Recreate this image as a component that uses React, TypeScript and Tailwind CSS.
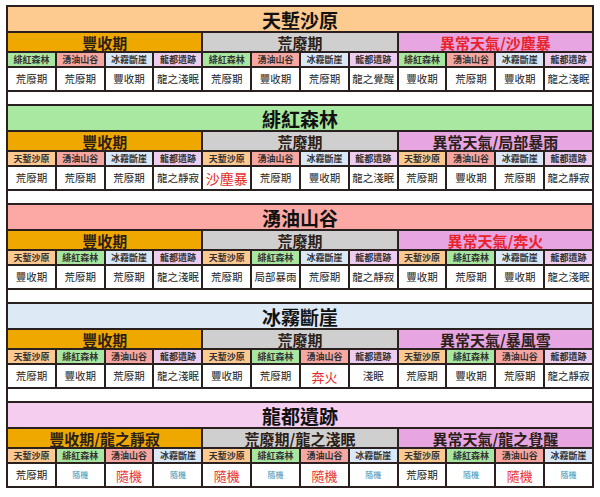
import React from "react";

type Val = { t: string; k?: "n" | "red" | "blue" | "redbig" };

const labelBg: Record<string, string> = {
  天塹沙原: "bg-[#fcc991]",
  緋紅森林: "bg-[#a9e6a0]",
  湧油山谷: "bg-[#f7a7a1]",
  冰霧斷崖: "bg-[#dce8f6]",
  龍都遺跡: "bg-[#eecdee]",
};

type Section = {
  title: string;
  titleBg: string;
  phases: { t: string; red?: boolean }[];
  labels: string[];
  values: Val[];
};

const sections: Section[] = [
  {
    title: "天塹沙原",
    titleBg: "bg-[#fdca90]",
    phases: [{ t: "豐收期" }, { t: "荒廢期" }, { t: "異常天氣/沙塵暴", red: true }],
    labels: ["緋紅森林", "湧油山谷", "冰霧斷崖", "龍都遺跡"],
    values: [
      { t: "荒廢期" }, { t: "荒廢期" }, { t: "豐收期" }, { t: "龍之淺眠" },
      { t: "荒廢期" }, { t: "豐收期" }, { t: "荒廢期" }, { t: "龍之覺醒" },
      { t: "豐收期" }, { t: "荒廢期" }, { t: "豐收期" }, { t: "龍之淺眠" },
    ],
  },
  {
    title: "緋紅森林",
    titleBg: "bg-[#a9e8a1]",
    phases: [{ t: "豐收期" }, { t: "荒廢期" }, { t: "異常天氣/局部暴雨" }],
    labels: ["天塹沙原", "湧油山谷", "冰霧斷崖", "龍都遺跡"],
    values: [
      { t: "荒廢期" }, { t: "荒廢期" }, { t: "荒廢期" }, { t: "龍之靜寂" },
      { t: "沙塵暴", k: "red" }, { t: "荒廢期" }, { t: "豐收期" }, { t: "龍之淺眠" },
      { t: "荒廢期" }, { t: "豐收期" }, { t: "荒廢期" }, { t: "龍之靜寂" },
    ],
  },
  {
    title: "湧油山谷",
    titleBg: "bg-[#fca9a5]",
    phases: [{ t: "豐收期" }, { t: "荒廢期" }, { t: "異常天氣/奔火", red: true }],
    labels: ["天塹沙原", "緋紅森林", "冰霧斷崖", "龍都遺跡"],
    values: [
      { t: "豐收期" }, { t: "荒廢期" }, { t: "荒廢期" }, { t: "龍之淺眠" },
      { t: "荒廢期" }, { t: "局部暴雨" }, { t: "荒廢期" }, { t: "龍之靜寂" },
      { t: "豐收期" }, { t: "荒廢期" }, { t: "豐收期" }, { t: "龍之淺眠" },
    ],
  },
  {
    title: "冰霧斷崖",
    titleBg: "bg-[#dee9f6]",
    phases: [{ t: "豐收期" }, { t: "荒廢期" }, { t: "異常天氣/暴風雪" }],
    labels: ["天塹沙原", "緋紅森林", "湧油山谷", "龍都遺跡"],
    values: [
      { t: "荒廢期" }, { t: "豐收期" }, { t: "荒廢期" }, { t: "龍之淺眠" },
      { t: "豐收期" }, { t: "荒廢期" }, { t: "奔火", k: "red" }, { t: "淺眠" },
      { t: "荒廢期" }, { t: "豐收期" }, { t: "荒廢期" }, { t: "龍之靜寂" },
    ],
  },
  {
    title: "龍都遺跡",
    titleBg: "bg-[#f4cdef]",
    phases: [{ t: "豐收期/龍之靜寂" }, { t: "荒廢期/龍之淺眠" }, { t: "異常天氣/龍之覺醒" }],
    labels: ["天塹沙原", "緋紅森林", "湧油山谷", "冰霧斷崖"],
    values: [
      { t: "荒廢期" }, { t: "隨機", k: "blue" }, { t: "隨機", k: "redbig" }, { t: "隨機", k: "blue" },
      { t: "隨機", k: "redbig" }, { t: "隨機", k: "blue" }, { t: "隨機", k: "redbig" }, { t: "隨機", k: "blue" },
      { t: "荒廢期" }, { t: "隨機", k: "blue" }, { t: "隨機", k: "redbig" }, { t: "隨機", k: "blue" },
    ],
  },
];

const phaseBg = ["bg-[#efa800]", "bg-[#cfcfcf]", "bg-[#e7a5e1]"];

function ValueCell({ v }: { v: Val }) {
  let cls = "text-[10.5px] text-[#222]";
  if (v.k === "red") cls = v.t.length === 3 ? "text-[14px] text-[#e52b2b]" : "text-[13px] text-[#e52b2b]";
  if (v.k === "redbig") cls = "text-[13px] text-[#e83232]";
  if (v.k === "blue") cls = "text-[8px] text-[#3a92b4]";
  return (
    <div className={`col-span-1 bg-white h-[22px] flex items-center justify-center leading-none ${cls}`}>
      {v.t}
    </div>
  );
}

export default function App() {
  return (
    <div
      className="w-[600px] h-[497px] bg-white overflow-hidden pt-[5px]"
      style={{ fontFamily: '"Noto Sans CJK TC", "Noto Sans CJK SC", sans-serif' }}
    >
      <div className="ml-[6px] w-[588px] border-x-2 border-[#2a2020] flex flex-col gap-[12px]">
        {sections.map((s, si) => (
          <div key={si} className="grid grid-cols-12 gap-[2px] bg-[#2a2020] border-y-2 border-[#2a2020]">
            <div className={`col-span-12 h-[24px] ${s.titleBg} flex items-center justify-center text-[19px] font-bold text-[#111] leading-none`}>
              {s.title}
            </div>
            {s.phases.map((p, pi) => (
              <div
                key={pi}
                className={`col-span-4 h-[18px] ${phaseBg[pi]} flex items-center justify-center text-[15px] font-bold leading-none ${p.red ? "text-[#e8232b]" : "text-[#2b2018]"}`}
              >
                {p.t}
              </div>
            ))}
            {[0, 1, 2].flatMap((g) =>
              s.labels.map((l, li) => (
                <div
                  key={`${g}-${li}`}
                  className={`col-span-1 h-[13px] ${labelBg[l]} flex items-center justify-center text-[9px] font-bold text-[#333] leading-none`}
                >
                  {l}
                </div>
              ))
            )}
            {s.values.map((v, vi) => (
              <ValueCell key={vi} v={v} />
            ))}
          </div>
        ))}
      </div>
    </div>
  );
}
